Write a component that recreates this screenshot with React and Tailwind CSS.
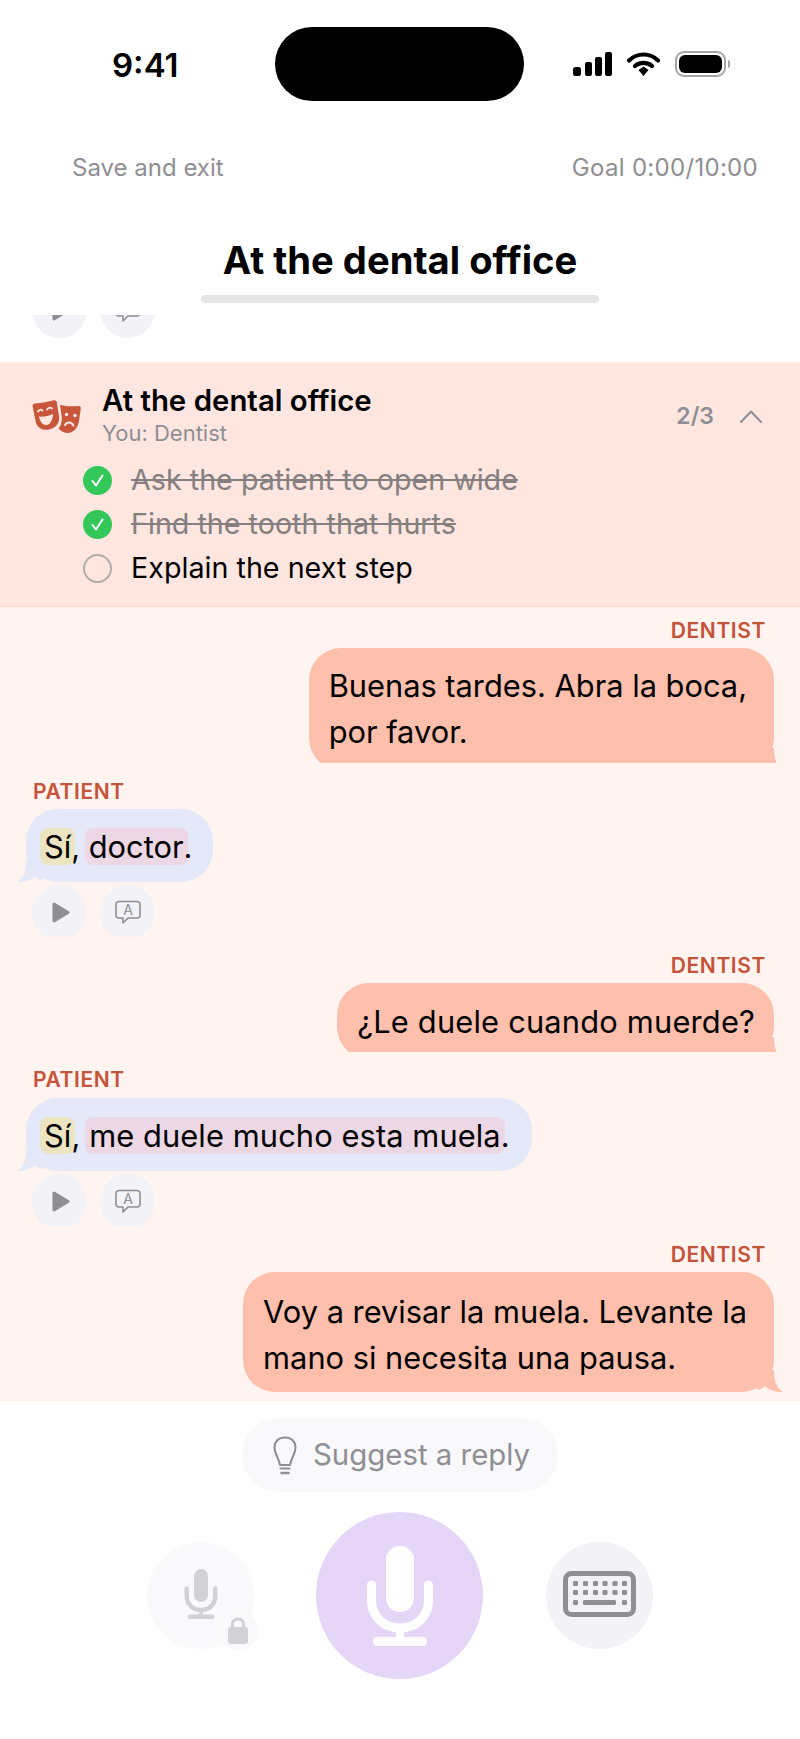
const Play = () => (
  <svg width="18" height="21" viewBox="0 0 18 21" className="ml-[2px]">
    <path d="M2 2 L16 10.5 L2 19 Z" fill="#8e8e93" stroke="#8e8e93" strokeWidth="3" strokeLinejoin="round" />
  </svg>
);

const Translate = ({ hideLetter }) => (
  <svg width="26" height="25" viewBox="0 0 26 25" fill="none">
    <path d="M4 1.5 H22 A3 3 0 0 1 25 4.500 V15 A3 3 0 0 1 22 18 H13 L8 23 V18 H4 A3 3 0 0 1 1 15 V4.500 A3 3 0 0 1 4 1.500 Z" stroke="#8e8e93" strokeWidth="1.6" strokeLinejoin="round" />
    {!hideLetter && <text x="13" y="15" textAnchor="middle" fontSize="14" fontFamily="Inter, sans-serif" fill="#8e8e93">A</text>}
  </svg>
);

const ActionButtons = ({ className, hideLetter }) => (
  <div className={"flex gap-[13px] overflow-hidden " + className}>
    <div className="w-[55px] h-[55px] shrink-0 rounded-full bg-[#f2f2f7] flex items-center justify-center"><Play /></div>
    <div className="w-[55px] h-[55px] shrink-0 rounded-full bg-[#f2f2f7] flex items-center justify-center"><Translate hideLetter={hideLetter} /></div>
  </div>
);

const StatusIcons = () => (
  <div className="flex items-center">
    <svg width="39" height="24" viewBox="0 0 39 24" fill="#000">
      <rect x="0" y="15" width="8" height="9" rx="2.500" />
      <rect x="12" y="10" width="7" height="14" rx="2" />
      <rect x="22" y="5" width="7" height="19" rx="2" />
      <rect x="32" y="0" width="7" height="24" rx="2" />
    </svg>
    <svg width="33" height="24" viewBox="0 0 33 24" fill="none" className="ml-[15px]">
      <path d="M2 8.500 C10 0.500 23 0.500 31 8.500" stroke="#000" strokeWidth="4.200" strokeLinecap="round" />
      <path d="M8 14 C12.500 9.800 20.500 9.800 25 14" stroke="#000" strokeWidth="4.200" strokeLinecap="round" />
      <path d="M11.500 18 L16.500 14.500 L21.500 18 L16.500 24 Z" fill="#000" />
    </svg>
    <div className="ml-[15px] w-[51px] h-[26px] rounded-[9px] border-2 border-[#a5a5a5] p-[2px]">
      <div className="w-full h-full rounded-[6px] bg-black" />
    </div>
    <div className="ml-[2px] w-[2px] h-[8px] rounded-r-full bg-[#a5a5a5]" />
  </div>
);

const Masks = () => (
  <svg width="49" height="33" viewBox="0 0 49 33" className="shrink-0 mt-[16px]">
    <path d="M0.500 6 C0.500 4.500 1.500 3.800 3 3.500 C9 3 15 2 21 0.500 C23 0 24.500 0.500 24.800 2.500 L27 16 C28 23 24 28 17 29.500 C10 31 5 27.500 3.500 21 Z" fill="#c8563b" />
    <path d="M6 11.500 C7 9.500 9 9.200 10.500 10.500 M15 9.500 C16 7.500 18.500 7.200 20 8.500" stroke="#ffe6e0" strokeWidth="1.800" fill="none" strokeLinecap="round" />
    <path d="M7 16.500 C11 17 17 16 21 14 C21 20 18 24.500 14.500 25 C10.500 25.500 8 21.500 7 16.500 Z" fill="#ffe6e0" />
    <path d="M28 5 C34 6.500 41 6.500 46.500 6 C48 6 49 7 48.800 8.500 L47 21 C46 28 41 33 36 33 C32.500 33 28.500 31 26.500 28.500 C29 26 30.500 21 29.500 15 Z" fill="#c8563b" />
    <circle cx="34.500" cy="14.500" r="1.800" fill="#ffe6e0" />
    <circle cx="43" cy="15.500" r="1.800" fill="#ffe6e0" />
    <path d="M33 25 C35 21.500 39.500 21.500 41.500 25.500" stroke="#ffe6e0" strokeWidth="2" fill="none" strokeLinecap="round" />
  </svg>
);

const Check = () => (
  <svg width="29" height="29" viewBox="0 0 29 29" className="shrink-0">
    <circle cx="14.500" cy="14.500" r="14.500" fill="#34c759" />
    <path d="M9.500 15 L13 19.500 L19.500 9.500" stroke="#fff" strokeWidth="2" fill="none" strokeLinecap="round" strokeLinejoin="round" />
  </svg>
);

const Goal = ({ done, children }) => (
  <div className="h-[44px] flex items-center gap-[19px]">
    {done ? <Check /> : <div className="w-[29px] h-[29px] shrink-0 rounded-full border-2 border-[#b5adab]" />}
    <span className={done ? "text-[28.7px] leading-[44px] line-through text-[#857f7f]" : "text-[28.7px] leading-[44px] text-black"}>{children}</span>
  </div>
);

const Speaker = ({ className, children }) => (
  <div className={"text-[21px] leading-[24px] font-semibold tracking-[0.6px] text-[#c4533a] " + className}>{children}</div>
);

// dentist bubbles get cut off a few px at the bottom in the reference
const MyBubble = ({ clip, inner, children }) => (
  <div className={"self-end overflow-hidden pr-[9px] mr-[17px] " + clip}>
    <div className={"relative rounded-[32px] bg-[#ffbfad] pl-[20px] text-[30.8px] leading-[46px] text-black " + inner}>
      {children}
      <svg width="26" height="22" viewBox="0 0 26 22" className="absolute right-[-9px] bottom-0">
        <path d="M6 0 H17 C17 10 19 18 26 22 C18 22 12 20 8 16 C6 18 4 19 0 20 Z" fill="#ffbfad" />
      </svg>
    </div>
  </div>
);

const TheirBubble = ({ className, children }) => (
  <div className={"relative self-start ml-[26px] h-[73px] rounded-[32px] bg-[#e4e8f8] pl-[18px] pt-[15px] text-[30.8px] leading-[46px] text-black " + className}>
    <svg width="26" height="22" viewBox="0 0 26 22" className="absolute left-[-9px] bottom-0">
      <path d="M20 0 H9 C9 10 7 18 0 22 C8 22 14 20 18 16 C20 18 22 19 26 20 Z" fill="#e4e8f8" />
    </svg>
    <span className="relative">{children}</span>
  </div>
);

const Yellow = ({ children }) => <span className="rounded-[8px] bg-[#ece4c0] px-[4px] mx-[-4px]">{children}</span>;
const Pink = ({ children }) => <span className="rounded-[8px] bg-[#ecd7e4] px-[4px] mx-[-4px]">{children}</span>;

const Mic = ({ color, className, width, height }) => (
  <svg width={width} height={height} viewBox="0 0 66 100" fill="none" className={className}>
    <rect x="19" y="0" width="28" height="66" rx="14" fill={color} />
    <path d="M4.500 39 V54 C4.500 71 17 82 33 82 C49 82 61.500 71 61.500 54 V39" stroke={color} strokeWidth="9" strokeLinecap="round" />
    <rect x="29" y="82" width="8" height="10" fill={color} />
    <rect x="6" y="91" width="54" height="9" rx="4.500" fill={color} />
  </svg>
);

const Bulb = () => (
  <svg width="24" height="39" viewBox="0 0 24 39" fill="none" className="shrink-0">
    <path d="M12 1.500 C5.500 1.500 1.500 5.500 1.500 11.500 C1.500 18 5.500 21 7 29 H17 C18.500 21 22.500 18 22.500 11.500 C22.500 5.500 18.500 1.500 12 1.500 Z" stroke="#8e8e93" strokeWidth="2" strokeLinejoin="round" />
    <path d="M7.500 32.500 H16.500" stroke="#8e8e93" strokeWidth="2" strokeLinecap="round" />
    <path d="M8.500 37 H15.500" stroke="#8e8e93" strokeWidth="2.500" strokeLinecap="round" />
  </svg>
);

const Keyboard = () => {
  const xs = [10, 20, 30, 39.500, 49.500, 59];
  return (
    <svg width="73" height="46" viewBox="0 0 73 46" fill="#8e8e93" className="mt-[-3px]">
      <rect x="2.500" y="2.500" width="68" height="41" rx="6" fill="none" stroke="#8e8e93" strokeWidth="5" />
      {xs.map((x) => <rect key={"a" + x} x={x} y="10" width="5" height="5" rx="1.200" />)}
      {xs.map((x) => <rect key={"b" + x} x={x} y="19" width="5" height="5" rx="1.200" />)}
      <rect x="10" y="29" width="5" height="5" rx="1.200" />
      <rect x="20" y="29" width="33" height="5" rx="1.500" />
      <rect x="59" y="29" width="5" height="5" rx="1.200" />
    </svg>
  );
};

const Lock = () => (
  <svg width="20" height="27" viewBox="0 0 20 27" fill="none">
    <path d="M4.500 12 V7.500 C4.500 4 7 2 10 2 C13 2 15.500 4 15.500 7.500 V12" stroke="#d1d1d6" strokeWidth="3" />
    <rect x="0" y="10" width="20" height="17" rx="3" fill="#d1d1d6" />
  </svg>
);

export default function App() {
  return (
    <div className="w-[800px] h-[1739px] bg-white overflow-hidden flex flex-col font-['Inter',sans-serif] text-black">
      {/* status bar */}
      <div className="flex items-center mt-[27px] h-[74px]">
        <div className="w-[275px] pl-[112px] pt-[2px] text-[33px] font-semibold leading-none">9:41</div>
        <div className="w-[249px] h-[74px] rounded-[37px] bg-black" />
        <div className="pl-[49px]"><StatusIcons /></div>
      </div>

      <div className="flex justify-between mt-[52px] h-[30px] pl-[72px] pr-[42px] text-[24px] leading-[30px] text-[#8e8e93]">
        <span>Save and exit</span>
        <span className="tracking-[0.3px]">Goal 0:00/10:00</span>
      </div>

      <h1 className="mt-[54px] h-[46px] text-center text-[38.2px] leading-[46px] font-bold">At the dental office</h1>
      <div className="mx-auto mt-[12px] w-[398px] h-[8px] shrink-0 rounded-full bg-[#e5e5e5]" />

      {/* previous message buttons scrolled under the header */}
      <div className="mt-[12px] h-[47px] shrink-0 overflow-hidden">
        <ActionButtons className="mt-[-32px] ml-[32px]" hideLetter />
      </div>

      {/* scenario card */}
      <div className="h-[245px] shrink-0 bg-[#ffe6e0] border-b border-[#ffd9d0] pt-[22px]">
        <div className="flex pl-[32px] pr-[38px]">
          <Masks />
          <div className="ml-[21px] flex-1">
            <div className="text-[29.4px] leading-[34px] font-semibold">At the dental office</div>
            <div className="mt-[2px] text-[22px] leading-[26px] text-[#8e8e93]">You: Dentist</div>
          </div>
          <div className="flex items-center h-[64px] gap-[26px]">
            <span className="text-[23px] font-semibold text-[#8e8e93]">2/3</span>
            <svg width="22" height="13" viewBox="0 0 22 13" fill="none">
              <path d="M1 12 L11 1.500 L21 12" stroke="#8e8e93" strokeWidth="2" strokeLinecap="round" strokeLinejoin="round" />
            </svg>
          </div>
        </div>
        <div className="mt-[10px] pl-[83px]">
          <Goal done>Ask the patient to open wide</Goal>
          <Goal done>Find the tooth that hurts</Goal>
          <Goal>Explain the next step</Goal>
        </div>
      </div>

      {/* conversation */}
      <div className="h-[795px] shrink-0 bg-[#fff4ef] flex flex-col pt-[12px]">
        <Speaker className="self-end mr-[34px]">DENTIST</Speaker>
        <MyBubble clip="mt-[5px] h-[115px]" inner="h-[122px] pt-[15px] pr-[27px]">
          Buenas tardes. Abra la boca,<br />por favor.
        </MyBubble>

        <Speaker className="ml-[33px] mt-[17px]">PATIENT</Speaker>
        <div className="mt-[5px] flex flex-col">
          <TheirBubble className="pr-[21px]"><Yellow>Sí</Yellow>, <Pink>doctor</Pink>.</TheirBubble>
        </div>
        <ActionButtons className="mt-[3px] ml-[32px] h-[52px]" />

        <Speaker className="self-end mr-[34px] mt-[17px]">DENTIST</Speaker>
        <MyBubble clip="mt-[5px] h-[69px]" inner="h-[76px] pt-[16px] pr-[19px] tracking-[0.2px]">¿Le duele cuando muerde?</MyBubble>

        <Speaker className="ml-[33px] mt-[16px]">PATIENT</Speaker>
        <div className="mt-[6px] flex flex-col">
          <TheirBubble className="pr-[22px] tracking-[0.1px]"><Yellow>Sí</Yellow>, <Pink>me duele mucho esta muela</Pink>.</TheirBubble>
        </div>
        <ActionButtons className="mt-[3px] ml-[32px] h-[52px]" />

        <Speaker className="self-end mr-[34px] mt-[17px]">DENTIST</Speaker>
        <MyBubble clip="mt-[5px] h-[120px]" inner="h-[120px] pt-[17px] pr-[27px]">
          Voy a revisar la muela. Levante la<br />mano si necesita una pausa.
        </MyBubble>
      </div>

      {/* input controls */}
      <div className="mt-[16px] mx-auto w-[316px] h-[74px] rounded-[37px] bg-[#f9f9fb] flex items-center pl-[31px] gap-[16px]">
        <Bulb />
        <span className="text-[29.4px] text-[#8e8e93]">Suggest a reply</span>
      </div>

      <div className="mt-[20px] flex items-center pl-[147px]">
        <div className="relative w-[107px] h-[107px] rounded-full bg-[#fafafc] flex items-center justify-center">
          <Mic color="#d1d1d6" width="34" height="50" className="mt-[-3px]" />
          <div className="absolute right-[-4px] bottom-[-1px] w-[40px] h-[40px] rounded-full bg-[#f9f9fb] flex items-center justify-center">
            <Lock />
          </div>
        </div>
        <div className="ml-[62px] w-[167px] h-[167px] rounded-full bg-[#e5d6f7] flex items-center justify-center">
          <Mic color="#ffffff" width="66" height="100" />
        </div>
        <div className="ml-[63px] w-[107px] h-[107px] rounded-full bg-[#f2f2f7] flex items-center justify-center">
          <Keyboard />
        </div>
      </div>
    </div>
  );
}
